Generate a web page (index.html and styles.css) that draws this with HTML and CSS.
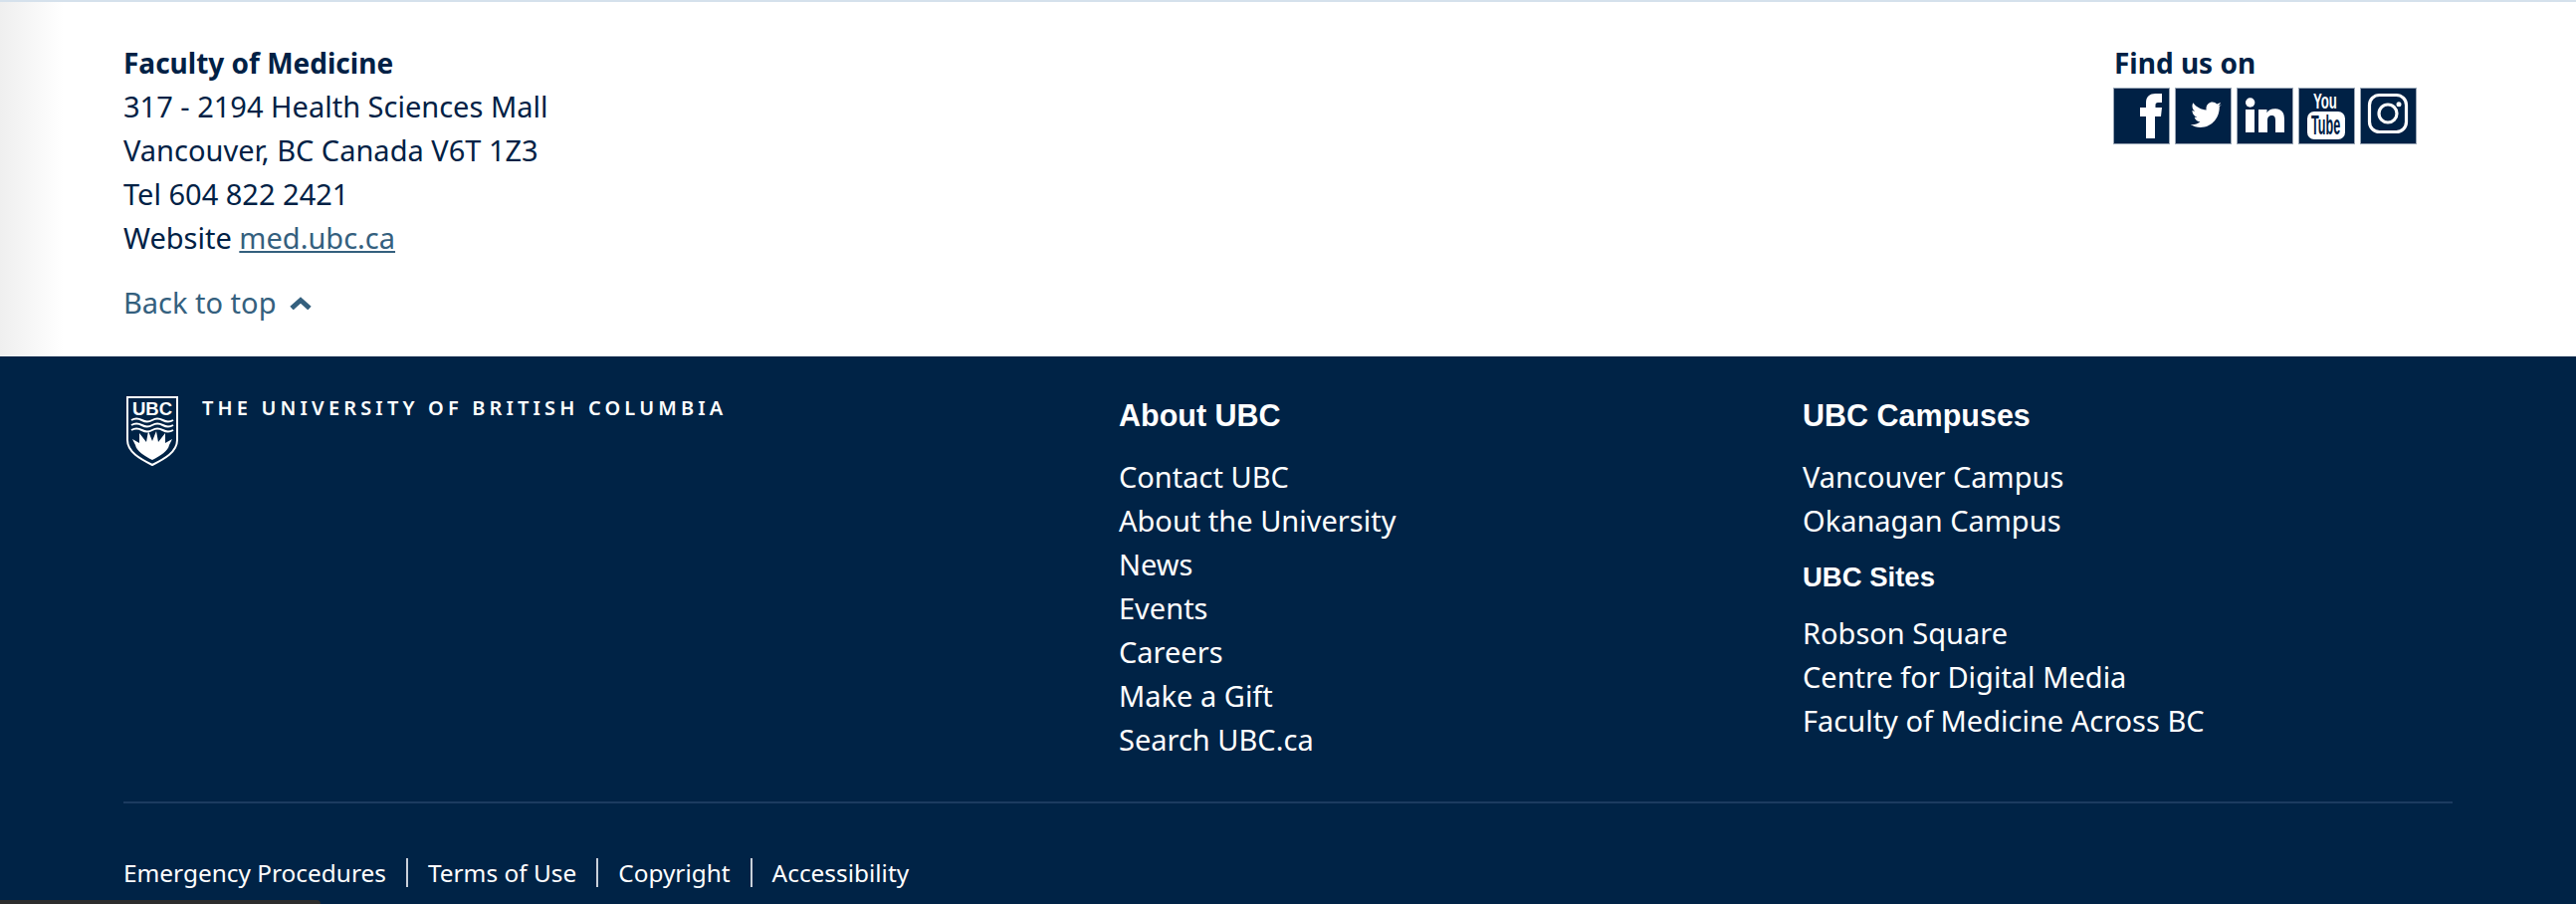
FILE: index.html
```html
<!DOCTYPE html>
<html>

    <head>
        <title>Faculty of Medicine - UBC</title>
        <link rel="stylesheet" href="styles.css">
    </head>

    <body>
        <section class="unidad">
            <div class="direccion">
                <strong>Faculty of Medicine</strong>
                <div>317 - 2194 Health Sciences Mall</div>
                <div>Vancouver, BC Canada V6T 1Z3</div>
                <div>Tel 604 822 2421</div>
                <div>Website <a href="#">med.ubc.ca</a></div>
                <a class="arriba" href="#">Back to top
                    <svg class="flecha" viewBox="0 0 22 13"><path d="M2 11.500 L11 3.500 L20 11.500" fill="none" stroke="#34607e" stroke-width="5"/></svg>
                </a>
            </div>
            <div class="social">
                <strong>Find us on</strong>
                <div class="iconos">
                    <a class="icono" href="#">
                        <svg viewBox="0 0 55 55"><path fill="#fff" d="M32 50V28h-6v-9h6v-5c0-6 4-9 9.500-9h6.500v9h-4c-1.700 0-2.500 1-2.500 2.500V19h6.500l-1 9H41v22z"/></svg>
                    </a>
                    <a class="icono" href="#">
                        <svg viewBox="0 0 55 55"><path transform="translate(5.400 3) scale(.875 .92)" fill="#fff" d="M46 14.500c-1.200.6-2.400.9-3.700 1.100 1.400-.8 2.400-2.100 2.900-3.600-1.300.7-2.700 1.300-4.200 1.600-2.700-2.900-7.200-3-10.100-.3-1.900 1.700-2.600 4.300-2.100 6.700-6-.3-11.500-3.100-15.200-7.800-1.800 3.200-.9 7.300 2.200 9.400-1.100 0-2.200-.3-3.200-.9 0 3.400 2.400 6.400 5.700 7.100-1 .3-2.100.3-3.200.1.900 2.900 3.600 4.900 6.700 5-3.200 2.400-7.100 3.500-11 3 3.300 2.100 7.200 3.300 11.100 3.300 14.500 0 22.500-12.100 21.900-22.800 1.500-1.100 2.800-2.400 3.700-3.900z"/></svg>
                    </a>
                    <a class="icono" href="#">
                        <svg viewBox="0 0 55 55"><g fill="#fff"><circle cx="12.700" cy="14" r="4.700"/><rect x="8" y="21" width="9" height="23"/><path d="M21 21h8.500v3.300c1.500-2.500 4-4 7.800-4 7.700 0 9.700 4.300 9.700 11V44h-9V32c0-3.100-.8-5-3.800-5-3.100 0-4.200 2.300-4.200 5.300V44h-9z"/></g></svg>
                    </a>
                    <a class="icono" href="#">
                        <svg viewBox="0 0 55 55">
                            <text class="yt-you" transform="translate(14 20) scale(.6 1)">You</text>
                            <rect x="8" y="23" width="38" height="28" rx="7" fill="#fff"/>
                            <text class="yt-tube" transform="translate(12 46) scale(.45 1)">Tube</text>
                        </svg>
                    </a>
                    <a class="icono" href="#">
                        <svg viewBox="0 0 55 55">
                            <rect x="8.500" y="6.500" width="37" height="37" rx="10" fill="none" stroke="#fff" stroke-width="3.200"/>
                            <circle cx="27" cy="25" r="9" fill="none" stroke="#fff" stroke-width="3.200"/>
                            <circle cx="38" cy="15.700" r="2.500" fill="#fff"/>
                        </svg>
                    </a>
                </div>
            </div>
        </section>

        <footer class="pie">
            <div class="columnas">
                <div class="marca">
                    <svg class="escudo" viewBox="0 0 52 70">
                        <path d="M1 1H51V44C51 56 38 63 26 69C14 63 1 56 1 44Z" fill="none" stroke="#fff" stroke-width="2"/>
                        <text class="escudo-ubc" x="26" y="18.500" text-anchor="middle">UBC</text>
                        <path d="M5 24q5-3 10.500 0t10.500 0t10.500 0t10.500 0M5 29q5-3 10.500 0t10.500 0t10.500 0t10.500 0M5 34q5-3 10.500 0t10.500 0t10.500 0t10.500 0" fill="none" stroke="#fff" stroke-width="2"/>
                        <path fill="#fff" d="M26 64C18 60 10 55 9 49L6 43L13 47L13 37L20 46L22 35L26 45L30 35L32 46L39 37L39 47L46 43L43 49C42 55 34 60 26 64Z"/>
                    </svg>
                    <span class="universidad">THE UNIVERSITY OF BRITISH COLUMBIA</span>
                </div>
                <div>
                    <h3>About UBC</h3>
                    <ul>
                        <li><a href="#">Contact UBC</a></li>
                        <li><a href="#">About the University</a></li>
                        <li><a href="#">News</a></li>
                        <li><a href="#">Events</a></li>
                        <li><a href="#">Careers</a></li>
                        <li><a href="#">Make a Gift</a></li>
                        <li><a href="#">Search UBC.ca</a></li>
                    </ul>
                </div>
                <div>
                    <h3>UBC Campuses</h3>
                    <ul>
                        <li><a href="#">Vancouver Campus</a></li>
                        <li><a href="#">Okanagan Campus</a></li>
                    </ul>
                    <h4>UBC Sites</h4>
                    <ul>
                        <li><a href="#">Robson Square</a></li>
                        <li><a href="#">Centre for Digital Media</a></li>
                        <li><a href="#">Faculty of Medicine Across BC</a></li>
                    </ul>
                </div>
            </div>
            <nav class="legal">
                <a href="#">Emergency Procedures</a>
                <a href="#">Terms of Use</a>
                <a href="#">Copyright</a>
                <a href="#">Accessibility</a>
            </nav>
            <div class="pestana"></div>
        </footer>
    </body>

</html>
```

FILE: styles.css
```css
html,
body {
    margin: 0;
    padding: 0;
    height: 100%;
    overflow: hidden;
    font-family: "Noto Sans", "Open Sans", sans-serif;
    font-size: 29px;
    color: #002145;
}

a {
    color: inherit;
    text-decoration: none;
}

strong {
    font-size: 28px;
}

.unidad {
    height: 358px;
    box-sizing: border-box;
    border-top: 2px solid #d5e1ec;
    padding: 39px 124px 0;
    display: flex;
    justify-content: space-between;
    background: linear-gradient(to right, #efefef, #fff 64px);
    line-height: 44px;
}

.direccion a {
    color: #34607e;
    text-decoration: underline;
}

.direccion .arriba {
    display: flex;
    align-items: center;
    gap: 14px;
    margin-top: 21px;
    text-decoration: none;
}

.flecha {
    width: 22px;
    height: 13px;
}

.social {
    width: 340px;
}

.iconos {
    display: flex;
    gap: 7px;
    margin-top: 4px;
}

.icono {
    display: block;
    width: 55px;
    height: 55px;
    background-color: #002145;
    box-shadow: 0 0 0 1px rgba(0, 33, 69, 0.4);
}

.icono svg {
    display: block;
    overflow: visible;
}

.yt-you {
    font-family: "Liberation Sans", sans-serif;
    font-size: 22px;
    font-weight: bold;
    fill: #fff;
}

.yt-tube {
    font-family: "Liberation Sans", sans-serif;
    font-size: 28px;
    font-weight: bold;
    fill: #002145;
}

.pie {
    position: relative;
    height: 550px;
    box-sizing: border-box;
    padding: 0 124px;
    background-color: #002346;
    color: #fff;
    line-height: 44px;
}

.columnas {
    height: 449px;
    box-sizing: border-box;
    border-bottom: 2px solid #1c3b60;
    display: grid;
    grid-template-columns: 1000px 687px 1fr;
}

.marca {
    display: flex;
    align-items: flex-start;
    padding: 40px 0 0 3px;
}

.escudo {
    width: 52px;
    height: 70px;
    flex: none;
}

.escudo-ubc {
    font-family: "Liberation Sans", sans-serif;
    font-size: 18.500px;
    font-weight: bold;
    fill: #fff;
}

.universidad {
    margin-left: 24px;
    font-size: 20px;
    font-weight: 600;
    letter-spacing: 4.150px;
    line-height: 24px;
}

h3,
h4 {
    margin: 0;
    font-family: "Liberation Sans", sans-serif;
    font-weight: bold;
}

h3 {
    font-size: 30.500px;
    line-height: 44px;
    margin-top: 37px;
    margin-bottom: 18px;
}

h4 {
    font-size: 27.500px;
    line-height: 44px;
    margin-top: 13px;
    margin-bottom: 12px;
}

ul {
    list-style: none;
    margin: 0;
    padding: 0;
}

.legal {
    display: flex;
    margin-top: 55px;
    font-size: 24.400px;
    line-height: 29px;
}

.legal a {
    padding: 0 20px;
    border-right: 2px solid #c8d0da;
}

.legal a:first-child {
    padding-left: 0;
}

.legal a:last-child {
    border-right: none;
}

.pestana {
    position: absolute;
    left: 0;
    bottom: 0;
    width: 322px;
    height: 4px;
    border-top-right-radius: 4px;
    background-color: #2d2d2d;
}
```
